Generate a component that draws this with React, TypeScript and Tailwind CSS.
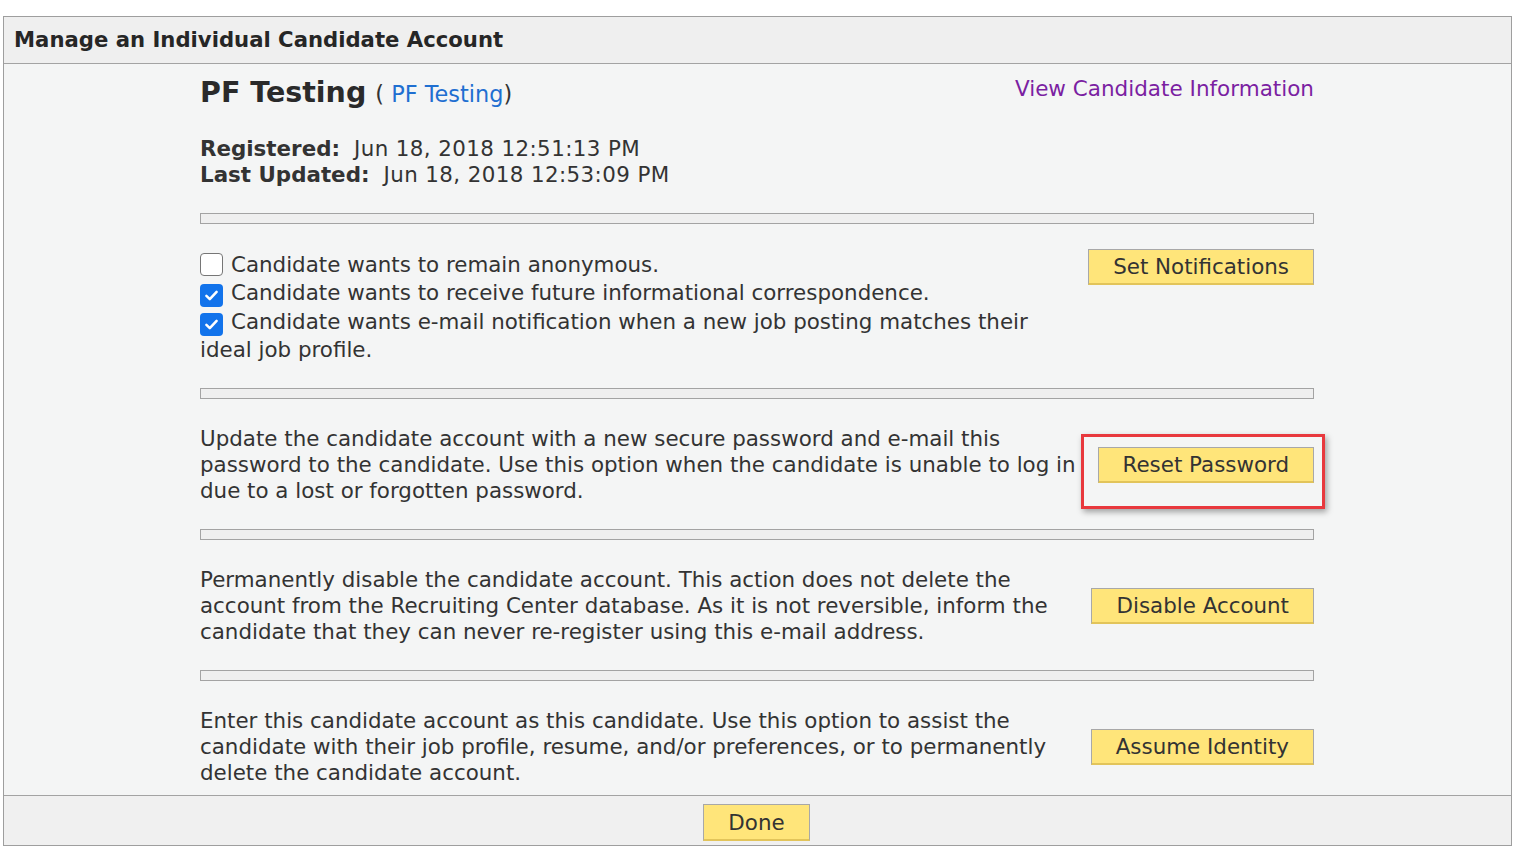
import React from 'react';

const font = { fontFamily: '"DejaVu Sans", Verdana, sans-serif' };

function YellowButton({ label, className = '' }: { label: string; className?: string }) {
  return (
    <button
      type="button"
      className={`h-[36px] shrink-0 border border-[#a8a8a8] border-b-[2px] border-b-[#e2c45a] bg-[#ffe57a] px-[24px] pt-[2px] text-[21.4px] leading-none text-[#333] ${className}`}
    >
      {label}
    </button>
  );
}

function Separator({ className = 'my-[25px]' }: { className?: string }) {
  return <div className={`h-[11px] border border-[#a3a3a3] bg-[#efefef] ${className}`} />;
}

function Check({ checked }: { checked: boolean }) {
  if (!checked) {
    return (
      <span className="mr-[8px] inline-block h-[23px] w-[23px] rounded-[4px] border-[1.5px] border-[#767676] bg-white align-[-4px]" />
    );
  }
  return (
    <span className="mr-[8px] inline-flex h-[23px] w-[23px] items-center justify-center rounded-[4px] bg-[#1273eb] align-[-4px]">
      <svg viewBox="0 0 16 16" className="h-[17px] w-[17px]">
        <path d="M3.2 8.4 6.4 11.4 12.8 4.6" fill="none" stroke="white" strokeWidth="2.4" strokeLinecap="round" strokeLinejoin="round" />
      </svg>
    </span>
  );
}

export default function App() {
  return (
    <div className="min-h-[848px] bg-white pt-[16px] text-[#333]" style={font}>
      <div className="mx-[3px] w-[1509px] border border-[#9e9e9e] bg-[#f4f5f5]">
        <div className="flex h-[47px] items-center border-b border-[#a3a3a3] bg-[#efefef] px-[10px]">
          <h1 className="text-[21.2px] font-bold text-[#262626]">Manage an Individual Candidate Account</h1>
        </div>

        <div className="ml-[196px] w-[1114px] pt-[11px]">
          <div className="flex items-start justify-between">
            <div className="flex items-baseline">
              <span className="text-[28.5px] font-bold leading-[36px] text-[#2a2a2a]">PF Testing</span>
              <span className="ml-[9px] text-[22.4px]">
                ( <a className="text-[#1f6fd1]">PF Testing</a>)
              </span>
            </div>
            <a className="mt-[-4px] text-[21.5px] leading-[36px] text-[#7b1fa2]">View Candidate Information</a>
          </div>

          <div className="mt-[24px] text-[21.4px] leading-[26px]">
            <div>
              <span className="font-bold">Registered:</span>
              <span className="ml-[14px] tracking-[0.4px]">Jun 18, 2018 12:51:13 PM</span>
            </div>
            <div>
              <span className="font-bold">Last Updated:</span>
              <span className="ml-[14px] tracking-[0.4px]">Jun 18, 2018 12:53:09 PM</span>
            </div>
          </div>

          <Separator />

          <div className="flex items-start justify-between">
            <div className="w-[860px] pt-[2px] text-[21.4px] leading-[28.5px]">
              <div>
                <Check checked={false} />
                Candidate wants to remain anonymous.
              </div>
              <div>
                <Check checked />
                Candidate wants to receive future informational correspondence.
              </div>
              <div>
                <Check checked />
                Candidate wants e-mail notification when a new job posting matches their ideal job profile.
              </div>
            </div>
            <YellowButton label="Set Notifications" />
          </div>

          <Separator className="mb-[25px] mt-[23px]" />

          <div className="flex items-center justify-between">
            <p className="flex-1 pt-[2px] text-[21.4px] leading-[26px]">
              Update the candidate account with a new secure password and e-mail this password to the candidate. Use
              this option when the candidate is unable to log in due to a lost or forgotten password.
            </p>
            <div className="relative mt-[2px] shrink-0">
              <YellowButton label="Reset Password" />
              <div className="pointer-events-none absolute -bottom-[26px] -left-[17px] -right-[11px] -top-[13px] border-[3px] border-[#e8383d] shadow-[2px_3px_6px_rgba(0,0,0,0.35)]" />
            </div>
          </div>

          <Separator />

          <div className="flex items-center justify-between">
            <p className="flex-1 pt-[2px] text-[21.4px] leading-[26px]">
              Permanently disable the candidate account. This action does not delete the account from the Recruiting
              Center database. As it is not reversible, inform the candidate that they can never re-register using
              this e-mail address.
            </p>
            <YellowButton label="Disable Account" className="mt-[2px]" />
          </div>

          <Separator />

          <div className="flex items-center justify-between pb-[9px]">
            <p className="flex-1 pt-[2px] text-[21.4px] leading-[26px]">
              Enter this candidate account as this candidate. Use this option to assist the candidate with their job
              profile, resume, and/or preferences, or to permanently delete the candidate account.
            </p>
            <YellowButton label="Assume Identity" className="mt-[2px]" />
          </div>
        </div>

        <div className="flex h-[50px] items-center justify-center border-t border-[#a3a3a3] bg-[#f0f0f0]">
          <YellowButton label="Done" className="ml-[-2px] mt-[4px] h-[37px]" />
        </div>
      </div>
    </div>
  );
}
